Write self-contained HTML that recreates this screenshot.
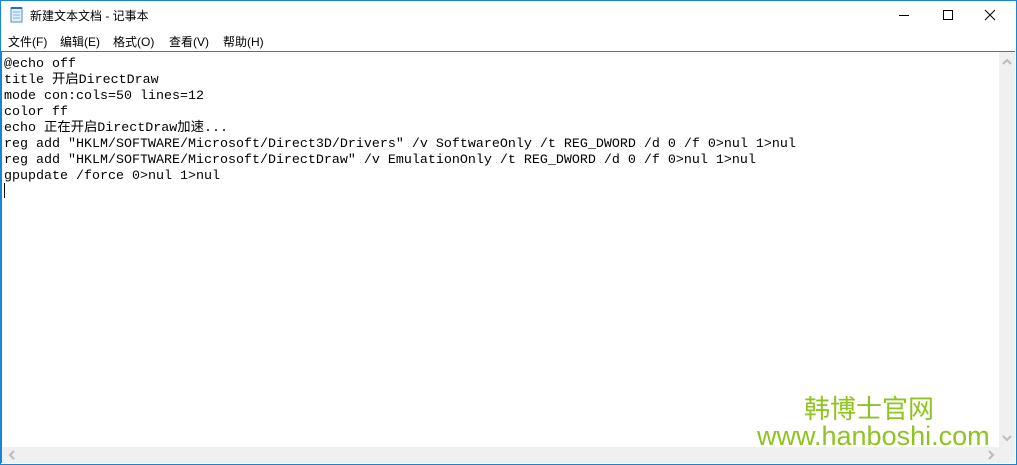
<!DOCTYPE html>
<html><head><meta charset="utf-8"><style>
body{margin:0;width:1017px;height:465px;overflow:hidden;background:#fff;position:relative;font-family:"Liberation Sans","Microsoft YaHei","Noto Sans CJK SC",sans-serif}
.abs{position:absolute}
.frame{left:0;top:0;width:1015px;height:463px;border:1px solid #1883d7}
.title{left:30px;top:7px;font-size:12px;color:#000}
.menu{top:33px;font-size:12px;color:#000}
.edit{left:0;top:51px;width:1015px;height:412px;border-top:1px solid #1883d7;border-left:2px solid #1883d7;box-sizing:border-box}
pre{margin:0;position:absolute;left:4px;top:57px;font-family:"Liberation Mono","Noto Sans CJK SC",monospace;font-size:13.33px;line-height:16px;color:#000}
.vs{left:999px;top:52px;width:16px;height:395px;background:#f0f0f0}
.hs{left:2px;top:447px;width:997px;height:16px;background:#f0f0f0}
.corner{left:999px;top:447px;width:16px;height:16px;background:#f0f0f0}
.wm{color:#8fc31f;font-family:"Liberation Sans","Noto Sans CJK SC",sans-serif}
</style></head><body>
<div class="abs frame"></div>
<svg class="abs" style="left:9px;top:6px" width="16" height="18" viewBox="0 0 16 18"><rect x="2" y="2" width="11" height="14" fill="#dff0fb" stroke="#4a8fc9"/><path d="M4 6h7M4 9h7M4 12h7" stroke="#8aaed0"/><path d="M2 2h11" stroke="#2c6eb4" stroke-width="2"/></svg>
<div class="abs title">新建文本文档 - 记事本</div>
<svg class="abs" style="left:896px;top:8px" width="120" height="16"><path d="M3 7.5h10" stroke="#000"/><rect x="47.5" y="2.5" width="9" height="9" fill="none" stroke="#000"/><path d="M89 2l10 10M99 2l-10 10" stroke="#000"/></svg>
<div class="abs menu" style="left:8px">文件(F)</div>
<div class="abs menu" style="left:60px">编辑(E)</div>
<div class="abs menu" style="left:113px">格式(O)</div>
<div class="abs menu" style="left:169px">查看(V)</div>
<div class="abs menu" style="left:223px">帮助(H)</div>
<div class="abs edit"></div>
<pre>@echo off
title 开启DirectDraw
mode con:cols=50 lines=12
color ff
echo 正在开启DirectDraw加速...
reg add "HKLM/SOFTWARE/Microsoft/Direct3D/Drivers" /v SoftwareOnly /t REG_DWORD /d 0 /f 0>nul 1>nul
reg add "HKLM/SOFTWARE/Microsoft/DirectDraw" /v EmulationOnly /t REG_DWORD /d 0 /f 0>nul 1>nul
gpupdate /force 0>nul 1>nul
</pre>
<div class="abs" style="left:4px;top:183px;width:1px;height:15px;background:#000"></div>
<div class="abs wm" style="left:804px;top:389px;font-size:26px;letter-spacing:0px">韩博士官网</div>
<div class="abs wm" style="left:757px;top:421px;font-size:27px">www.hanboshi.com</div>
<div class="abs vs"></div>
<svg class="abs" style="left:1002px;top:58px" width="10" height="8"><path d="M1 6l4-4 4 4" stroke="#bbb" stroke-width="2" fill="none"/></svg>
<svg class="abs" style="left:1002px;top:434px" width="10" height="8"><path d="M1 2l4 4 4-4" stroke="#bbb" stroke-width="2" fill="none"/></svg>
<div class="abs hs"></div>
<svg class="abs" style="left:8px;top:450px" width="8" height="10"><path d="M6 1L2 5l4 4" stroke="#bbb" stroke-width="2" fill="none"/></svg>
<svg class="abs" style="left:987px;top:450px" width="8" height="10"><path d="M2 1l4 4-4 4" stroke="#bbb" stroke-width="2" fill="none"/></svg>
<div class="abs corner"></div>
</body></html>
